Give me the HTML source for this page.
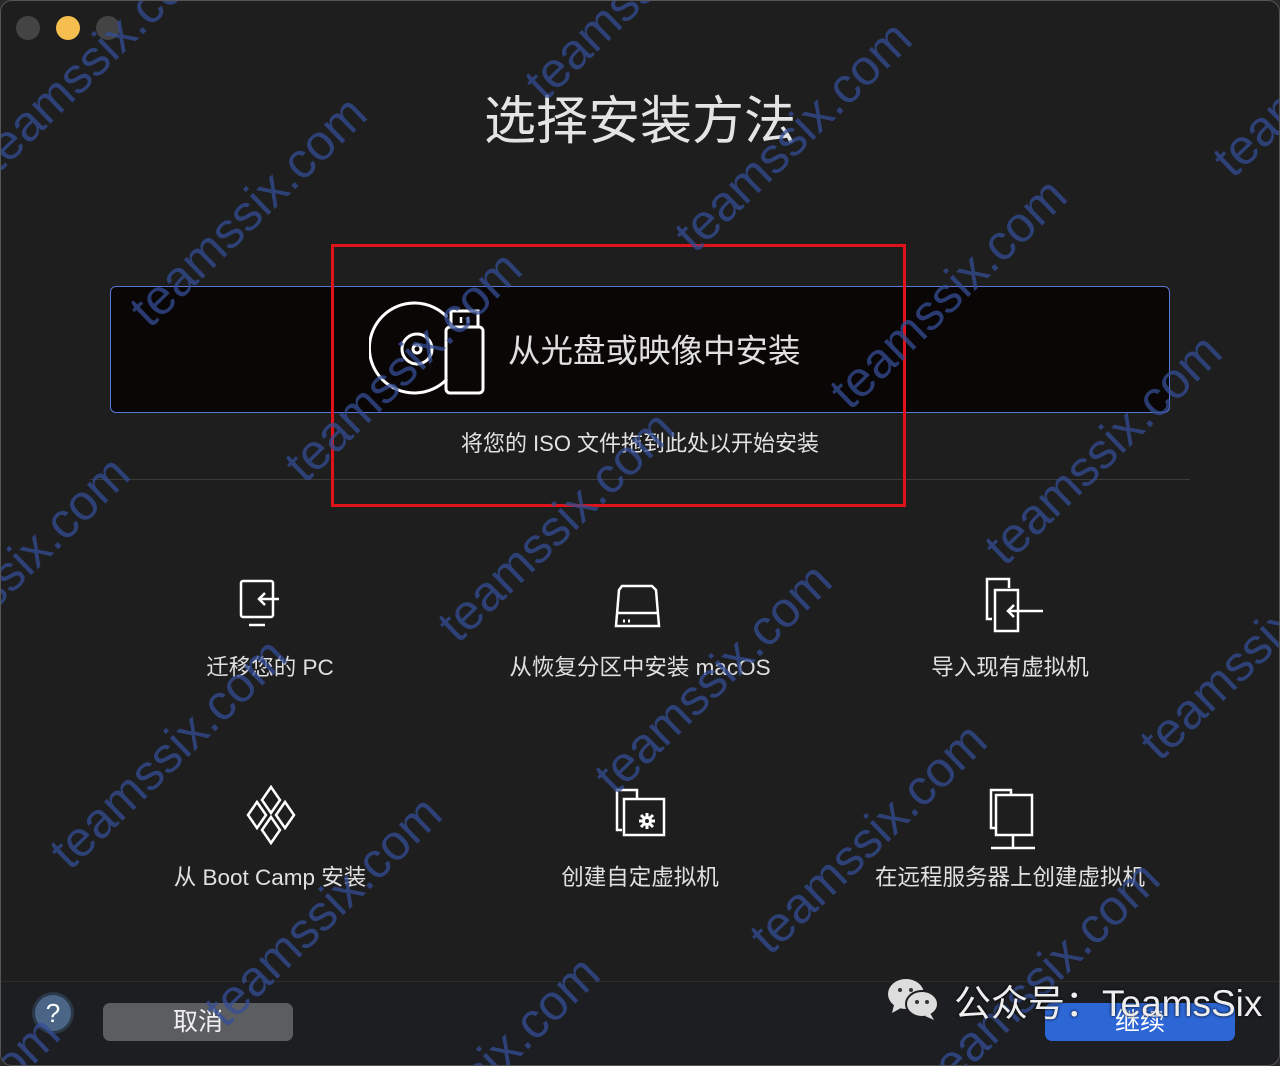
<!DOCTYPE html>
<html><head><meta charset="utf-8"><style>
html,body{margin:0;padding:0;width:1280px;height:1066px;overflow:hidden;background:#2a2a2a}
body{font-family:"Liberation Sans","Noto Sans CJK SC",sans-serif;position:relative}
.win{position:absolute;left:0;top:0;width:1278px;height:1064px;border:1px solid #555;border-radius:12px;background:#1e1e1e;overflow:hidden;overflow:clip}
.foot{position:absolute;left:0;top:980px;width:100%;bottom:0;background:#1c1e21;border-top:1px solid #2c2c2c}
.dot{position:absolute;top:15px;width:24px;height:24px;border-radius:50%}
.t{position:absolute;color:#e2e2e2;white-space:nowrap}
.wm{position:absolute;color:rgba(52,78,150,0.75);font-size:50px;white-space:nowrap;transform:translate(-50%,-50%) rotate(-44deg);pointer-events:none}
svg{position:absolute}
.lbl{position:absolute;color:#e0e0e0;font-size:22.5px;transform:translateX(-50%);white-space:nowrap}
</style></head><body>
<div class="win">
<div class="dot" style="left:15px;background:#444"></div>
<div class="dot" style="left:55px;background:#f6bd4f"></div>
<div class="dot" style="left:95px;background:#444"></div>

<div class="t" style="left:-1px;width:1280px;text-align:center;top:78px;font-size:52px;color:#e4e4e4">选择安装方法</div>

<div style="position:absolute;left:109px;top:285px;width:1058px;height:125px;border:1px solid #5579d8;border-radius:6px;background:#090605"></div>
<svg style="left:368px;top:300px" width="120" height="96" viewBox="0 0 120 96" fill="none" stroke="#fff" stroke-width="3">
<path d="M78 16 A45 45 0 1 0 78 78"/>
<circle cx="48" cy="48" r="15"/><circle cx="48" cy="48" r="4"/>
<rect x="77" y="26" width="37" height="66" rx="4"/>
<rect x="82" y="10" width="27" height="16"/>
<path d="M92 16v6M99 16v6" stroke-width="2.5"/>
</svg>
<div class="t" style="left:507px;top:324px;font-size:32.5px;color:#e0e0e0">从光盘或映像中安装</div>
<div class="t" style="left:-1px;width:1280px;text-align:center;top:425px;font-size:22px">将您的 ISO 文件拖到此处以开始安装</div>
<div style="position:absolute;left:89px;top:478px;width:1100px;height:1px;background:#3a3a3a"></div>
<div style="position:absolute;left:330px;top:243px;width:569px;height:257px;border:3px solid #e0131b"></div>

<svg style="left:236px;top:575px" width="60" height="60" viewBox="0 0 60 60" fill="none" stroke="#fff" stroke-width="2.5">
<rect x="4" y="5" width="32" height="36" rx="2"/><path d="M12 49h16"/><path d="M22 23h20M28 17l-6 6 6 6"/></svg>
<svg style="left:608px;top:580px" width="60" height="52" viewBox="0 0 60 52" fill="none" stroke="#fff" stroke-width="2.5">
<path d="M13 5h30l4 4 3 36H7l3-36z"/><path d="M7 32h43"/><path d="M14 40h2M19 40h2" stroke-width="3"/></svg>
<svg style="left:980px;top:575px" width="65" height="60" viewBox="0 0 65 60" fill="none" stroke="#fff" stroke-width="2.5">
<path d="M28 12V3H6v40h5"/><rect x="14" y="14" width="23" height="41"/><path d="M27 35h35M33 29l-6 6 6 6"/></svg>
<div class="lbl" style="left:269px;top:649px">迁移您的 PC</div>
<div class="lbl" style="left:639px;top:649px">从恢复分区中安装 macOS</div>
<div class="lbl" style="left:1009px;top:649px">导入现有虚拟机</div>

<svg style="left:238px;top:782px" width="64" height="64" viewBox="0 0 64 64" fill="none" stroke="#fff" stroke-width="2.5">
<path d="M32 4l9 13-9 13-9-13z"/><path d="M18 19l9 13-9 13-9-13z"/><path d="M46 19l9 13-9 13-9-13z"/><path d="M32 34l9 13-9 13-9-13z"/></svg>
<svg style="left:610px;top:785px" width="60" height="60" viewBox="0 0 60 60" fill="none" stroke="#fff" stroke-width="2.5">
<path d="M26 12V4H6v40h5"/><rect x="13" y="13" width="40" height="36"/>
<g transform="translate(36 35)"><circle r="5" fill="#fff" stroke="none"/><path d="M0-8v16M-8 0h16M-6-6l12 12M6-6l-12 12" stroke-width="3"/><circle r="2" fill="#1e1e1e" stroke="none"/></g></svg>
<svg style="left:985px;top:785px" width="55" height="65" viewBox="0 0 55 65" fill="none" stroke="#fff" stroke-width="2.5">
<path d="M25 8V4H5v38h5"/><rect x="10" y="9" width="36" height="40"/><path d="M27 49v12M5 62h44"/></svg>
<div class="lbl" style="left:269px;top:859px">从 Boot Camp 安装</div>
<div class="lbl" style="left:639px;top:859px">创建自定虚拟机</div>
<div class="lbl" style="left:1009px;top:859px">在远程服务器上创建虚拟机</div>

<div class="foot"></div>
<div style="position:absolute;left:31px;top:991px;width:42px;height:42px;border-radius:50%;background:#4b6586;border:3px solid #2b3746;box-sizing:border-box;color:#fff;font-size:26px;text-align:center;line-height:36px">?</div>
<div style="position:absolute;left:102px;top:1002px;width:190px;height:38px;border-radius:7px;background:#5b5d60;color:#f0f0f0;font-size:25px;text-align:center;line-height:38px">取消</div>
<div style="position:absolute;left:1044px;top:1002px;width:190px;height:38px;border-radius:7px;background:#2d66d5;color:#fff;font-size:25px;text-align:center;line-height:38px">继续</div>

<div class="wm" style="left:95px;top:55px">teamssix.com</div>
<div class="wm" style="left:642px;top:-17px">teamssix.com</div>
<div class="wm" style="left:247px;top:210px">teamssix.com</div>
<div class="wm" style="left:792px;top:135px">teamssix.com</div>
<div class="wm" style="left:947px;top:292px">teamssix.com</div>
<div class="wm" style="left:402px;top:365px">teamssix.com</div>
<div class="wm" style="left:555px;top:525px">teamssix.com</div>
<div class="wm" style="left:1102px;top:448px">teamssix.com</div>
<div class="wm" style="left:1257px;top:643px">teamssix.com</div>
<div class="wm" style="left:10px;top:570px">teamssix.com</div>
<div class="wm" style="left:167px;top:752px">teamssix.com</div>
<div class="wm" style="left:712px;top:677px">teamssix.com</div>
<div class="wm" style="left:867px;top:837px">teamssix.com</div>
<div class="wm" style="left:322px;top:910px">teamssix.com</div>
<div class="wm" style="left:1040px;top:975px">teamssix.com</div>
<div class="wm" style="left:480px;top:1070px">teamssix.com</div>
<div class="wm" style="left:1330px;top:60px">teamssix.com</div>
<div class="wm" style="left:-60px;top:1130px">teamssix.com</div>

<svg style="left:885px;top:976px" width="54" height="44" viewBox="0 0 54 44">
<ellipse cx="20" cy="17" rx="18" ry="15" fill="#ddd"/><path d="M8 28l-2 8 9-5z" fill="#ddd"/>
<ellipse cx="36" cy="27" rx="16" ry="13" fill="#ddd" stroke="#1e1e1e" stroke-width="2"/><path d="M44 36l4 7-9-4z" fill="#ddd"/>
<circle cx="14" cy="13" r="2" fill="#333"/><circle cx="25" cy="13" r="2" fill="#333"/>
<circle cx="31" cy="25" r="2" fill="#333"/><circle cx="41" cy="25" r="2" fill="#333"/></svg>
<div class="t" style="left:953px;top:972px;font-size:37px;color:#eee;text-shadow:0 0 3px #000">公众号：TeamsSix</div>
</div>
</body></html>
